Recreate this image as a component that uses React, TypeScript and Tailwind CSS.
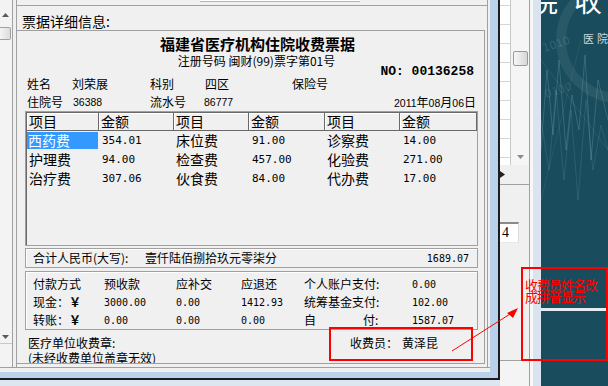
import React from 'react';

const items = [
  ['西药费', '354.01', '床位费', '91.00', '诊察费', '14.00'],
  ['护理费', '94.00', '检查费', '457.00', '化验费', '271.00'],
  ['治疗费', '307.06', '伙食费', '84.00', '代办费', '17.00'],
];

const headers = ['项目', '金额', '项目', '金额', '项目', '金额'];

const cols = 'grid grid-cols-[72px_75px_75px_76px_75px_77px]';
const payCols = 'grid grid-cols-[71px_72px_65px_63px_108px_1fr] h-[18px] items-center';
const mono = "font-['DejaVu_Sans_Mono',monospace]";

function UpArrow() {
  return (
    <svg width="7" height="4" viewBox="0 0 7 4">
      <path d="M0 4 L3.5 0 L7 4 Z" fill="#5a5a5a" />
    </svg>
  );
}

function DownArrow({ color = '#5a5a5a' }: { color?: string }) {
  return (
    <svg width="7" height="4" viewBox="0 0 7 4">
      <path d="M0 0 L3.5 4 L7 0 Z" fill={color} />
    </svg>
  );
}

function LeftScroll() {
  return (
    <div className="w-[13px] h-full shrink-0 flex flex-col border-r border-[#a0a0a0] bg-[#f3f3f3]">
      <div className="pt-[13px] pl-[2px] h-[17px]">
        <UpArrow />
      </div>
      <div className="mt-[10px] w-[11px] h-[13px] rounded-r-[2px] border border-l-0 border-[#a0a0a0] bg-gradient-to-r from-[#f4f4f4] to-[#dcdcdc]" />
      <div className="mt-auto pl-[2px] h-[4px] flex">
        <DownArrow />
      </div>
      <div className="h-[5px] border-b border-[#c8c8c8]" />
      <div className="h-[23px]" />
    </div>
  );
}

function Receipt() {
  return (
    <div className="w-[472px] h-full shrink-0 flex flex-col border-l border-r border-[#a0a0a0]">
      <div className="h-[6px] border-b border-[#a0a0a0]">
        <div className="ml-[183px] w-[160px] h-[2px] bg-white border-b border-[#b4b4b4]" />
      </div>
      <div className="h-[24px] pt-[8px] pl-[5px] text-[14px] leading-[14px]">票据详细信息:</div>

      {/* group box */}
      <div className="w-[468px] h-[334px] overflow-hidden border-t border-r border-b border-[#a0a0a0] pl-[8px]">
        <div className="w-[453px] pt-[4px]">
          <div className="h-[18px] leading-[18px] text-[15px] font-bold text-center pl-[12px]">
            福建省医疗机构住院收费票据
          </div>
          <div className="mt-[1px] h-[14px] leading-[14px] text-[12px] text-center pl-[10px]">
            注册号码 闽财(99)票字第01号
          </div>
          <div className="-mt-[2px] h-[12px] leading-[12px] text-right pr-[4px] text-[13px] font-bold font-['Liberation_Mono',monospace]">
            NO: 00136258
          </div>

          <div className="flex h-[12px] leading-[12px] text-[12px] pl-[2px]">
            <span className="w-[45px]">姓名</span>
            <span className="w-[78px]">刘荣展</span>
            <span className="w-[55px]">科别</span>
            <span className="w-[87px]">四区</span>
            <span>保险号</span>
          </div>
          <div className="flex items-center mt-[6px] h-[12px] leading-[12px] text-[12px] pl-[2px] pr-[2px]">
            <span className="w-[46px]">住院号</span>
            <span className="w-[77px] text-[10.5px] font-['Liberation_Sans',sans-serif]">36388</span>
            <span className="w-[54px]">流水号</span>
            <span className="text-[10.5px] font-['Liberation_Sans',sans-serif]">86777</span>
            <span className="ml-auto text-[10.5px] font-['Liberation_Sans',sans-serif]">
              2011<span className="text-[12px] font-['Noto_Sans_CJK_SC',sans-serif]">年</span>08
              <span className="text-[12px] font-['Noto_Sans_CJK_SC',sans-serif]">月</span>06
              <span className="text-[12px] font-['Noto_Sans_CJK_SC',sans-serif]">日</span>
            </span>
          </div>

          {/* fee list */}
          <div className="mt-[3px] h-[135px] border border-[#a0a0a0]">
            <div className="h-full border-t border-l border-[#696969] bg-[#f0f0f0]">
              <div className={`${cols} h-[18px]`}>
                {headers.map((h, i) => (
                  <div
                    key={i}
                    className="border-r border-b border-[#696969] shadow-[inset_1px_1px_0_#ffffff] pl-[2px] text-[14px] leading-[17px]"
                  >
                    {h}
                  </div>
                ))}
              </div>
              {items.map((row, r) => (
                <div key={r} className={`${cols} h-[19px]`}>
                  {row.map((c, i) => {
                    if (r === 0 && i === 0) {
                      return (
                        <div key={i} className="pt-[1px]">
                          <div className="w-[71px] h-[17px] bg-[#3399ff] text-white pl-[1px] text-[14px] leading-[17px]">{c}</div>
                        </div>
                      );
                    }
                    return i % 2 === 1 ? (
                      <div key={i} className={`pl-[3px] text-[11px] leading-[19px] ${mono}`}>{c}</div>
                    ) : (
                      <div key={i} className="pl-[2px] text-[14px] leading-[19px]">{c}</div>
                    );
                  })}
                </div>
              ))}
            </div>
          </div>

          {/* total */}
          <div className="mt-[2px] h-[20px] flex items-center border border-[#a0a0a0] shadow-[inset_1px_1px_0_#ffffff] pl-[7px] pr-[8px] text-[12px]">
            <span className="w-[112px]">合计人民币(大写):</span>
            <span>壹仟陆佰捌拾玖元零柒分</span>
            <span className={`ml-auto text-[10px] ${mono}`}>1689.07</span>
          </div>

          {/* payment */}
          <div className="mt-[3px] h-[59px] border border-[#a0a0a0] shadow-[inset_1px_1px_0_#ffffff] pt-[3px] pl-[7px] text-[12px]">
            <div className={payCols}>
              <span>付款方式</span>
              <span>预收款</span>
              <span>应补交</span>
              <span>应退还</span>
              <span>个人账户支付:</span>
              <span className={`text-[10px] ${mono}`}>0.00</span>
            </div>
            <div className={payCols}>
              <span>现金：<b>￥</b></span>
              <span className={`text-[10px] ${mono}`}>3000.00</span>
              <span className={`text-[10px] ${mono}`}>0.00</span>
              <span className={`text-[10px] ${mono}`}>1412.93</span>
              <span>统筹基金支付:</span>
              <span className={`text-[10px] ${mono}`}>102.00</span>
            </div>
            <div className={payCols}>
              <span>转账：<b>￥</b></span>
              <span className={`text-[10px] ${mono}`}>0.00</span>
              <span className={`text-[10px] ${mono}`}>0.00</span>
              <span className={`text-[10px] ${mono}`}>0.00</span>
              <span className="flex">
                <span className="w-[59px]">自</span>
                <span>付:</span>
              </span>
              <span className={`text-[10px] ${mono}`}>1587.07</span>
            </div>
          </div>

          {/* footer */}
          <div className="flex pt-[5px] text-[12px]">
            <div className="w-[325px] pl-[3px]">
              <div className="h-[16px] leading-[16px]">医疗单位收费章:</div>
              <div className="h-[14px] leading-[14px]">(未经收费单位盖章无效)</div>
            </div>
            <div className="h-[16px] leading-[16px] flex">
              <span>收费员：</span>
              <span className="ml-[4px]">黄泽昆</span>
            </div>
          </div>
        </div>
      </div>
    </div>
  );
}

function SidePanel() {
  return (
    <div className="w-[41px] h-full shrink-0 flex">
      <div className="w-[30px] h-full flex flex-col bg-[#f0f0f0] border-r border-[#a0a0a0]">
        <div className="h-[165px] flex">
          <div className="w-[11px] h-full overflow-hidden bg-white border-r border-[#c8c8c8] flex flex-col">
            <div className="h-[6px] shrink-0 border-b border-[#d6d6d6]" />
            {Array.from({ length: 9 }).map((_, i) => (
              <div key={i} className="h-[19px] shrink-0 border-b border-[#d6d6d6]" />
            ))}
          </div>
          <div className="w-[18px] h-full flex flex-col items-center bg-[#f5f5f5]">
            <div className="mt-[51px] w-[15px] h-[15px] rounded-[2px] border border-[#999999] bg-gradient-to-r from-[#f8f8f8] to-[#d6d6d6]" />
            <div className="mt-auto mb-[6px] flex">
              <DownArrow color="#8a8a8a" />
            </div>
          </div>
        </div>
        <div className="h-[20px] border-b border-[#a0a0a0] flex items-center">
          <svg width="5" height="7" viewBox="0 0 5 7">
            <path d="M0 0 L5 3.5 L0 7 Z" fill="#222222" />
          </svg>
        </div>
        <div className="mt-[37px] w-[19px] h-[21px] bg-white border-t-2 border-r border-b border-t-[#8a8a8a] border-r-[#dcdcdc] border-b-[#e8e8e8] pl-[2px] text-[14px] leading-[18px] font-['Liberation_Serif',serif]">
          4
        </div>
        <div className="h-[118px] border-b border-[#a0a0a0]" />
        <div className="flex-1 bg-[#f4f4f4]" />
      </div>
      <div className="flex-1 h-full border-l-[3px] border-[#f7f7f7] bg-[#dae4ef]" />
    </div>
  );
}

function TealPanel() {
  return (
    <div className="relative w-[67px] h-full shrink-0 overflow-hidden bg-[#194c5c]">
      <svg className="absolute left-0 top-0" width="67" height="386" viewBox="0 0 67 386">
        <circle cx="78" cy="40" r="58" fill="none" stroke="#ffffff" strokeOpacity="0.07" strokeWidth="10" />
        <polyline
          points="0,150 6,70 12,135 18,60 25,150 31,95 38,130 44,55 50,160 57,80 67,120"
          fill="none"
          stroke="#9fd0dc"
          strokeOpacity="0.22"
          strokeWidth="1"
        />
        <polyline
          points="0,120 8,170 15,90 23,180 30,110 37,200 45,100 52,170 60,125 67,150"
          fill="none"
          stroke="#9fd0dc"
          strokeOpacity="0.14"
          strokeWidth="1"
        />
        <line x1="0" y1="60" x2="67" y2="150" stroke="#9fd0dc" strokeOpacity="0.12" />
        <line x1="0" y1="200" x2="40" y2="40" stroke="#9fd0dc" strokeOpacity="0.1" />
        <text x="3" y="52" fontSize="11" fill="#9fd0dc" fillOpacity="0.2" transform="rotate(-18 3 52)" fontFamily="DejaVu Sans">1010</text>
        <text x="5" y="98" fontSize="11" fill="#9fd0dc" fillOpacity="0.16" transform="rotate(-18 5 98)" fontFamily="DejaVu Sans">0100</text>
        <rect x="0" y="308" width="67" height="3" fill="#e6edf0" />
      </svg>
      <div className="relative flex -mt-[14px] -ml-[11px] gap-[16px] text-[28px] leading-[28px] text-white whitespace-nowrap">
        <span>院</span>
        <span>收</span>
      </div>
      <div className="relative mt-[18px] ml-[42px] text-[11px] leading-[12px] tracking-[3px] text-[#c9d6dc] whitespace-nowrap">
        医院收费
      </div>
    </div>
  );
}

function Annotations() {
  return (
    <>
      <div className="absolute left-[329px] top-[327px] w-[144px] h-[34px] border-2 border-[#ff0000] pointer-events-none" />
      <svg className="absolute left-0 top-0 pointer-events-none" width="608" height="386">
        <line x1="452" y1="351" x2="510" y2="314" stroke="#ff0000" strokeWidth="1" />
        <polygon points="518,308 507,313 513,318" fill="#ff0000" />
      </svg>
      <div className="absolute left-[521px] top-[267px] w-[87px] h-[94px] border-2 border-[#ff0000] pt-[10px] pl-[2px] text-[#ff0000] text-[13px] leading-[12px] tracking-[-1px] whitespace-nowrap">
        <div>收费员姓名改</div>
        <div>成拼音显示</div>
      </div>
    </>
  );
}

export default function App() {
  return (
    <div className="relative flex w-[608px] h-[386px] overflow-hidden bg-[#dce6f1] text-black font-['Noto_Sans_CJK_SC',sans-serif]">
      {/* receipt window */}
      <div className="w-[500px] h-[380px] shrink-0 border-r-2 border-b-2 border-[#1c1c1c] bg-[#b9d1ea] pr-[8px] pb-[6px]">
        <div className="w-[490px] h-[372px] flex flex-col bg-[#f0f0f0]">
          <div className="h-[367px] flex">
            <LeftScroll />
            <div className="w-[3px] shrink-0" />
            <Receipt />
          </div>
          <div className="flex-1 border-t border-[#a0a0a0]" />
        </div>
      </div>
      <SidePanel />
      <TealPanel />
      <Annotations />
    </div>
  );
}
